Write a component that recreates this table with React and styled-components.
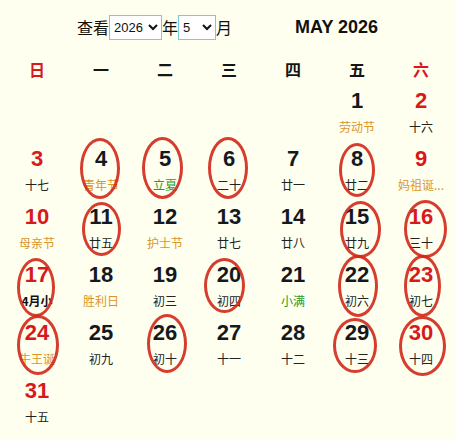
import React from "react";
import styled, { createGlobalStyle } from "styled-components";

const GlobalStyle = createGlobalStyle`
  html, body {
    margin: 0;
    background: #fffff0;
  }
  body {
    font-family: "Liberation Sans", "Noto Sans CJK SC", sans-serif;
  }
`;

const Page = styled.div`
  width: 456px;
  height: 439px;
  background: #fffff0;
  overflow: hidden;
`;

const TopBar = styled.div`
  display: flex;
  align-items: center;
  height: 54px;
  padding-left: 77px;
`;

const Picker = styled.div`
  display: flex;
  align-items: center;
  font: 16px "Noto Sans CJK SC", sans-serif;
  color: #111;
`;

const Select = styled.select`
  width: ${(p) => p.$w}px;
  height: 25px;
  margin: 0;
  padding: 0;
  border: 1px solid #7cc8dc;
  border-radius: 0;
  background: #fff;
  color: #111;
  font: 13px "Liberation Sans", sans-serif;
`;

const MonthTitle = styled.div`
  margin-left: 63px;
  font: bold 18px "Liberation Sans", sans-serif;
  color: #111;
`;

const WeekRow = styled.div`
  display: grid;
  grid-template-columns: repeat(7, 64px);
  padding-left: 5px;
  height: 30px;
  align-items: center;
`;

const WeekHead = styled.div`
  text-align: center;
  font: bold 16px "Noto Sans CJK SC", sans-serif;
  color: ${(p) => (p.$weekend ? "#d7191c" : "#151515")};
`;

const DayGrid = styled.div`
  display: grid;
  grid-template-columns: repeat(7, 64px);
  grid-auto-rows: 58px;
  padding-left: 5px;
`;

const DayCell = styled.div`
  position: relative;
  box-sizing: border-box;
  padding-top: 2px;
  text-align: center;
`;

const DayNum = styled.div`
  font: bold 22px/30px "Liberation Sans", sans-serif;
  color: ${(p) => (p.$weekend ? "#d7191c" : "#141820")};
`;

const lunarColors = {
  fest: "#d9952b",
  term: "#22992e",
  plain: "#222",
  month: "#111",
};

const Lunar = styled.div`
  font: ${(p) => (p.$kind === "month" ? "bold" : "normal")} 12px/22px
    "Noto Sans CJK SC", sans-serif;
  color: ${(p) => lunarColors[p.$kind]};
  white-space: nowrap;
  overflow: hidden;
`;

const Ring = styled.span`
  position: absolute;
  left: ${(p) => p.$x}px;
  top: ${(p) => p.$y}px;
  width: ${(p) => p.$w}px;
  height: ${(p) => p.$h}px;
  box-sizing: border-box;
  border: 3px solid rgba(208, 40, 24, 0.9);
  border-radius: 50%;
  pointer-events: none;
`;

const weekdays = ["日", "一", "二", "三", "四", "五", "六"];

// [day, lunar text, kind, ring [dx, dy, w, h] or null]
const days = [
  [1, "劳动节", "fest"],
  [2, "十六", "plain"],
  [3, "十七", "plain"],
  [4, "青年节", "fest", [11, -4, 40, 61]],
  [5, "立夏", "term", [9, -5, 41, 62]],
  [6, "二十", "plain", [11, -5, 40, 62]],
  [7, "廿一", "plain"],
  [8, "廿二", "plain", [14, 1, 36, 54]],
  [9, "妈祖诞...", "fest"],
  [10, "母亲节", "fest"],
  [11, "廿五", "plain", [13, 2, 39, 54]],
  [12, "护士节", "fest"],
  [13, "廿七", "plain"],
  [14, "廿八", "plain"],
  [15, "廿九", "plain", [15, 1, 41, 57]],
  [16, "三十", "plain", [15, 0, 43, 58]],
  [17, "4月小", "month", [12, 0, 38, 59]],
  [18, "胜利日", "fest"],
  [19, "初三", "plain"],
  [20, "初四", "plain", [7, 0, 41, 55]],
  [21, "小满", "term"],
  [22, "初六", "plain", [13, -3, 40, 62]],
  [23, "初七", "plain", [15, -3, 37, 62]],
  [24, "牛王诞", "fest", [12, -1, 42, 60]],
  [25, "初九", "plain"],
  [26, "初十", "plain", [14, -2, 40, 59]],
  [27, "十一", "plain"],
  [28, "十二", "plain"],
  [29, "十三", "plain", [8, 2, 44, 55]],
  [30, "十四", "plain", [10, 0, 47, 60]],
  [31, "十五", "plain"],
];

const firstWeekday = 5;

export default function App() {
  const cells = [];
  for (let i = 0; i < firstWeekday; i++) cells.push(<DayCell key={"e" + i} />);
  days.forEach(([d, text, kind, ring], i) => {
    const col = (firstWeekday + i) % 7;
    const weekend = col === 0 || col === 6;
    cells.push(
      <DayCell key={d}>
        <DayNum $weekend={weekend}>{d}</DayNum>
        <Lunar $kind={kind}>{text}</Lunar>
        {ring && <Ring $x={ring[0]} $y={ring[1]} $w={ring[2]} $h={ring[3]} />}
      </DayCell>
    );
  });

  return (
    <Page>
      <GlobalStyle />
      <TopBar>
        <Picker>
          查看
          <Select $w={53} defaultValue="2026">
            <option>2025</option>
            <option>2026</option>
            <option>2027</option>
          </Select>
          年
          <Select $w={38} defaultValue="5">
            {Array.from({ length: 12 }, (_, i) => (
              <option key={i}>{i + 1}</option>
            ))}
          </Select>
          月
        </Picker>
        <MonthTitle>MAY 2026</MonthTitle>
      </TopBar>
      <WeekRow>
        {weekdays.map((w, i) => (
          <WeekHead key={w} $weekend={i === 0 || i === 6}>
            {w}
          </WeekHead>
        ))}
      </WeekRow>
      <DayGrid>{cells}</DayGrid>
    </Page>
  );
}
